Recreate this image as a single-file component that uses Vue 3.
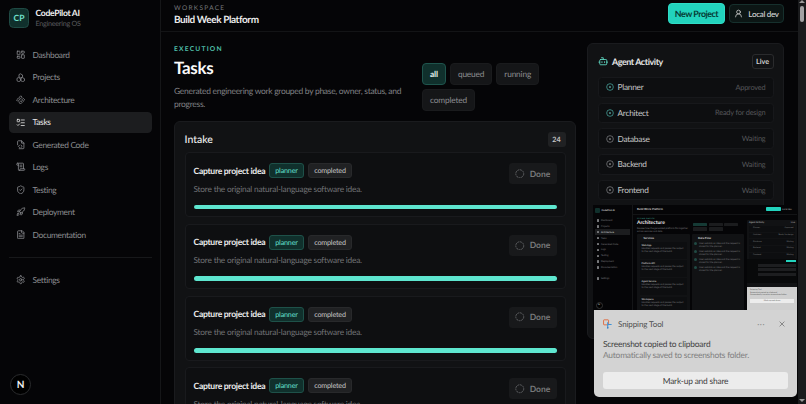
<template>
  <div class="shell">
    <!-- left nav -->
    <aside class="sidebar">
      <div class="brand">
        <div class="brand-logo">CP</div>
        <div>
          <div class="brand-name">CodePilot AI</div>
          <div class="brand-sub">Engineering OS</div>
        </div>
      </div>
      <nav class="nav">
        <a v-for="item in navItems" :key="item.label" class="nav-item" :class="{ active: item.label === 'Tasks' }">
          <svg class="nav-icon" viewBox="0 0 24 24" v-html="item.icon"></svg>
          {{ item.label }}
        </a>
      </nav>
      <div class="nav-divider"></div>
      <a class="nav-item">
        <svg class="nav-icon" viewBox="0 0 24 24" v-html="settingsIcon"></svg>
        Settings
      </a>
      <div class="next-badge">N</div>
    </aside>

    <div class="main">
      <header class="topbar">
        <div>
          <div class="workspace-label">WORKSPACE</div>
          <div class="workspace-name">Build Week Platform</div>
        </div>
        <div class="topbar-actions">
          <button class="btn-new">New Project</button>
          <button class="btn-user">
            <svg viewBox="0 0 24 24" class="user-icon"><circle cx="12" cy="8" r="5" /><path d="M20 21a8 8 0 0 0-16 0" /></svg>
            Local dev
          </button>
        </div>
      </header>

      <div class="content">
        <section class="tasks-col">
          <div class="eyebrow">EXECUTION</div>
          <div class="page-head">
            <div class="page-head-text">
              <h1>Tasks</h1>
              <p>Generated engineering work grouped by phase, owner, status, and progress.</p>
            </div>
            <div class="filters">
              <button v-for="f in filters" :key="f" class="filter" :class="{ on: f === 'all' }">{{ f }}</button>
            </div>
          </div>

          <div class="phase">
            <div class="phase-head">
              <h2>Intake</h2>
              <span class="count">24</span>
            </div>
            <div v-for="n in 4" :key="n" class="task">
              <div class="task-body">
                <div class="task-title-row">
                  <span class="task-title">Capture project idea</span>
                  <span class="tag tag-owner">planner</span>
                  <span class="tag">completed</span>
                </div>
                <div class="task-desc">Store the original natural-language software idea.</div>
              </div>
              <button class="btn-done">
                <svg viewBox="0 0 24 24" class="spin"><circle cx="12" cy="12" r="10" stroke-dasharray="5 1.6" /></svg>
                Done
              </button>
              <div class="progress"></div>
            </div>
          </div>
        </section>

        <aside class="activity">
          <div class="activity-head">
            <svg viewBox="0 0 24 24" class="bot"><path d="M12 8V4H8" /><rect x="4" y="8" width="16" height="12" rx="2" /><path d="M2 14h2M20 14h2M15 13v2M9 13v2" /></svg>
            <span class="activity-title">Agent Activity</span>
            <span class="live">Live</span>
          </div>
          <div v-for="a in agents" :key="a.name" class="agent">
            <svg viewBox="0 0 24 24" class="agent-dot" :class="{ ready: a.ready }"><circle cx="12" cy="12" r="10" /><circle cx="12" cy="12" r="1.6" class="pip" /></svg>
            <span class="agent-name">{{ a.name }}</span>
            <span class="agent-status">{{ a.status }}</span>
          </div>
        </aside>
      </div>
    </div>

    <div class="scrollbar">
      <span class="arrow up"></span>
      <span class="thumb"></span>
      <span class="arrow down"></span>
    </div>

    <!-- screenshot preview that Windows lays over the page -->
    <div class="shot">
      <div class="shot-side">
        <div class="shot-brand"><i></i><span>CodePilot AI</span></div>
        <div v-for="item in navItems" :key="item.label" class="shot-nav" :class="{ on: item.label === 'Architecture' }"><i></i>{{ item.label }}</div>
        <div class="shot-nav shot-settings"><i></i>Settings</div>
        <div class="shot-n">N</div>
      </div>
      <div class="shot-main">
        <div class="shot-top">
          <b>Build Week Platform</b>
          <span class="shot-new"></span>
          <span class="shot-dev">Local dev</span>
        </div>
        <div class="shot-body">
          <div class="shot-left">
            <div class="shot-eyebrow">SYSTEM DESIGN</div>
            <div class="shot-head">
              <div class="shot-title">
                <strong>Architecture</strong>
                <p>Review how the generated platform fits together across services and data.</p>
              </div>
              <div class="shot-chips"><i class="hi"></i><i></i><i></i><i></i><i></i></div>
            </div>
            <div class="shot-cols">
              <div class="shot-panel">
                <h4>Services</h4>
                <div v-for="s in miniServices" :key="s" class="shot-card">
                  <em>{{ s }}</em>
                  <p>Handles requests and passes the output to the next stage of the build.</p>
                </div>
              </div>
              <div class="shot-panel">
                <h4>Data Flow</h4>
                <div v-for="n in 4" :key="n" class="shot-step"><i></i><p>User submits an idea and the request is stored for the planner.</p></div>
              </div>
            </div>
          </div>
          <div class="shot-right">
            <div class="shot-act-title"><b>Agent Activity</b><span>Live</span></div>
            <div v-for="a in agents" :key="a.name" class="shot-agent"><span>{{ a.name }}</span><span>{{ a.status }}</span></div>
            <div class="shot-nested">
              <div class="shot-nested-bar"></div>
              <div class="shot-nested-row"></div>
              <div class="shot-nested-row"></div>
              <div class="shot-nested-row"></div>
            </div>
            <div class="shot-toast">
              <div>Snipping Tool</div>
              <p>Screenshot copied to clipboard</p>
              <p>Automatically saved to screenshots folder.</p>
              <div class="shot-toast-btn">Mark-up and share</div>
            </div>
          </div>
        </div>
      </div>
    </div>

    <div class="toast">
      <div class="toast-head">
        <svg viewBox="0 0 18 18" class="snip">
          <rect x="1" y="1.5" width="9" height="9" rx="1" fill="none" stroke="#e0663a" stroke-width="1.6" />
          <path d="M8.5 6v10M8.5 10h7" stroke="#3d93d8" stroke-width="2" fill="none" />
          <circle cx="8.5" cy="16" r="1.5" fill="#3d7fc4" />
        </svg>
        <span class="toast-app">Snipping Tool</span>
        <span class="toast-more">···</span>
        <svg viewBox="0 0 10 10" class="toast-close"><path d="M1 1l8 8M9 1l-8 8" /></svg>
      </div>
      <div class="toast-title">Screenshot copied to clipboard</div>
      <div class="toast-sub">Automatically saved to screenshots folder.</div>
      <button class="toast-btn">Mark-up and share</button>
    </div>
  </div>
</template>

<script setup>
const navItems = [
  { label: 'Dashboard', icon: '<rect x="3" y="3" width="7" height="9" rx="1"/><rect x="14" y="3" width="7" height="5" rx="1"/><rect x="14" y="12" width="7" height="9" rx="1"/><rect x="3" y="16" width="7" height="5" rx="1"/>' },
  { label: 'Projects', icon: '<path d="M12 2.5l4.5 2.5v5L12 12.5 7.5 10V5z"/><path d="M7 12l4.5 2.5v5L7 22l-4.5-2.5v-5z"/><path d="M17 12l4.5 2.5v5L17 22l-4.5-2.5v-5z"/>' },
  { label: 'Architecture', icon: '<path d="M8.5 5.5 12 2l3.5 3.5L12 9z"/><path d="M15 12l3.5-3.5L22 12l-3.5 3.5z"/><path d="M2 12l3.5-3.5L9 12l-3.5 3.5z"/><path d="M8.5 18.5 12 15l3.5 3.5L12 22z"/>' },
  { label: 'Tasks', icon: '<path d="M13 5h8M13 12h8M13 19h8"/><rect x="3" y="3.5" width="6" height="6" rx="1"/><path d="M3 17l2 2 4-4"/>' },
  { label: 'Generated Code', icon: '<path d="M4 12V4a2 2 0 0 1 2-2h8l6 6v12a2 2 0 0 1-2 2H8"/><path d="M14 2v6h6"/><path d="M9 13l-3 3 3 3M13 13l2 3-2 3"/>' },
  { label: 'Logs', icon: '<path d="M15 12h-5M15 8h-5"/><path d="M19 17V5a2 2 0 0 0-2-2H4"/><path d="M8 21h12a2 2 0 0 0 2-2v-1a1 1 0 0 0-1-1H11a1 1 0 0 0-1 1v1a2 2 0 1 1-4 0V5a2 2 0 1 0-4 0v2a1 1 0 0 0 1 1h3"/>' },
  { label: 'Testing', icon: '<path d="M20 13c0 5-3.5 7.500-7.660 8.950a1 1 0 0 1-.670-.010C7.500 20.500 4 18 4 13V6a1 1 0 0 1 1-1c2 0 4.500-1.200 6.240-2.720a1.170 1.170 0 0 1 1.520 0C14.510 3.810 17 5 19 5a1 1 0 0 1 1 1z"/><path d="M9 12l2 2 4-4"/>' },
  { label: 'Deployment', icon: '<path d="M4.500 16.500c-1.500 1.260-2 5-2 5s3.740-.5 5-2c.710-.840.700-2.130-.090-2.910a2.180 2.180 0 0 0-2.910-.090z"/><path d="M12 15l-3-3a22 22 0 0 1 2-3.950A12.880 12.880 0 0 1 22 2c0 2.720-.780 7.500-6 11a22.350 22.350 0 0 1-4 2z"/><path d="M9 12H4s.550-3.030 2-4c1.620-1.080 5 0 5 0M12 15v5s3.030-.550 4-2c1.080-1.620 0-5 0-5"/>' },
  { label: 'Documentation', icon: '<path d="M15 2H6a2 2 0 0 0-2 2v16a2 2 0 0 0 2 2h12a2 2 0 0 0 2-2V7z"/><path d="M14 2v4a2 2 0 0 0 2 2h4"/><path d="M10 9H8M16 13H8M16 17H8"/>' }
]
const settingsIcon = '<path d="M12.220 2h-.440a2 2 0 0 0-2 2v.180a2 2 0 0 1-1 1.730l-.430.250a2 2 0 0 1-2 0l-.150-.080a2 2 0 0 0-2.730.730l-.220.380a2 2 0 0 0 .730 2.730l.150.100a2 2 0 0 1 1 1.720v.510a2 2 0 0 1-1 1.740l-.150.090a2 2 0 0 0-.730 2.730l.220.380a2 2 0 0 0 2.730.730l.150-.080a2 2 0 0 1 2 0l.430.250a2 2 0 0 1 1 1.730V20a2 2 0 0 0 2 2h.440a2 2 0 0 0 2-2v-.180a2 2 0 0 1 1-1.730l.430-.250a2 2 0 0 1 2 0l.150.080a2 2 0 0 0 2.730-.730l.220-.390a2 2 0 0 0-.730-2.730l-.150-.080a2 2 0 0 1-1-1.740v-.500a2 2 0 0 1 1-1.740l.150-.090a2 2 0 0 0 .730-2.730l-.220-.380a2 2 0 0 0-2.730-.730l-.150.080a2 2 0 0 1-2 0l-.430-.250a2 2 0 0 1-1-1.730V4a2 2 0 0 0-2-2z"/><circle cx="12" cy="12" r="3"/>'
const filters = ['all', 'queued', 'running', 'completed']
const agents = [
  { name: 'Planner', status: 'Approved', ready: true },
  { name: 'Architect', status: 'Ready for design', ready: true },
  { name: 'Database', status: 'Waiting' },
  { name: 'Backend', status: 'Waiting' },
  { name: 'Frontend', status: 'Waiting' }
]
const miniServices = ['Web App', 'Platform API', 'Agent Service', 'Workspace']
</script>

<style>
html, body { margin: 0; background: #050507; overflow: hidden; }
</style>

<style scoped>
.shell {
  position: relative;
  display: flex;
  width: 806px;
  height: 404px;
  overflow: hidden;
  background: #050507;
  color: #e6e6e6;
  font-family: Lato, "Noto Sans", sans-serif;
  text-rendering: geometricPrecision;
}
.sidebar {
  position: relative;
  width: 161px;
  flex: none;
  box-sizing: border-box;
  padding: 7px 8.5px 0 9px;
  border-right: 1px solid #151618;
}
.brand { display: flex; align-items: center; gap: 6.5px; margin-bottom: 15.5px; }
.brand-logo {
  width: 20px;
  height: 20px;
  box-sizing: border-box;
  display: flex;
  align-items: center;
  justify-content: center;
  border: 1px solid #1f4a44;
  border-radius: 4.5px;
  background: #10302c;
  color: #71e0cd;
  font-size: 8.5px;
  font-weight: 700;
}
.brand-name { font-size: 8.600px; line-height: 12px; letter-spacing: -0.300px; font-weight: 700; color: #f0f0f0; }
.brand-sub { font-size: 7.200px; line-height: 10px; letter-spacing: -0.250px; color: #5b5c5f; }
.nav { display: flex; flex-direction: column; gap: 1.45px; }
.nav-item {
  display: flex;
  align-items: center;
  gap: 7px;
  height: 21px;
  padding-left: 7px;
  border-radius: 4.5px;
  font-size: 8.400px;
  letter-spacing: -0.300px;
  color: #8c8d90;
}
.nav-item.active { background: #1c1d1f; color: #eaeaea; }
.nav-icon {
  width: 9.500px;
  height: 9.500px;
  fill: none;
  stroke: currentColor;
  stroke-width: 2;
  stroke-linecap: round;
  stroke-linejoin: round;
  flex: none;
}
.nav-divider { height: 1px; background: #17181a; margin: 12px 0 11.500px; }
.next-badge {
  position: absolute;
  left: 10px;
  bottom: 9px;
  width: 21px;
  height: 21px;
  box-sizing: border-box;
  border: 1px solid #2a2b2d;
  border-radius: 50%;
  background: #000;
  color: #f2f2f2;
  font-size: 10px;
  font-weight: 700;
  display: flex;
  align-items: center;
  justify-content: center;
}
.main { flex: 1; min-width: 0; display: flex; flex-direction: column; }
.topbar {
  height: 32px;
  flex: none;
  box-sizing: border-box;
  display: flex;
  align-items: flex-start;
  justify-content: space-between;
  padding: 3px 14px 0 13px;
  border-bottom: 1px solid #131416;
}
.workspace-label { padding-top: 1px; font-size: 6.500px; line-height: 9px; letter-spacing: 1.300px; color: #77787b; }
.workspace-name { font-size: 10px; line-height: 14px; letter-spacing: -0.400px; margin-top: -0.500px; font-weight: 700; color: #ececec; }
.topbar-actions { display: flex; align-items: center; gap: 4px; }
button { font-family: inherit; text-rendering: inherit; }
.btn-new {
  width: 57px;
  height: 21px;
  padding: 0;
  border: 1px solid #2fdcc6;
  border-radius: 4px;
  background: #22d3bd;
  color: #053a34;
  font-size: 8.800px;
  letter-spacing: -0.450px;
  font-weight: 700;
}
.btn-user {
  width: 55px;
  height: 19px;
  padding: 0;
  display: flex;
  align-items: center;
  justify-content: center;
  gap: 5px;
  border: 1px solid #16302d;
  border-radius: 4px;
  background: #0c1615;
  color: #d5d5d5;
  font-size: 8px;
  letter-spacing: -0.300px;
  font-weight: 500;
}
.user-icon { width: 9px; height: 9px; fill: none; stroke: currentColor; stroke-width: 2; stroke-linecap: round; }
.content { flex: 1; min-height: 0; display: flex; gap: 11px; padding: 12.500px 13px 0; overflow: hidden; }
.tasks-col { width: 402px; flex: none; }
.eyebrow { font-size: 6.700px; line-height: 9px; letter-spacing: 1.200px; font-weight: 700; color: #4fbfa9; }
.page-head { display: flex; gap: 14px; margin-top: 0.500px; }
.page-head-text { width: 234px; flex: none; }
h1 { margin: 0; font-size: 17px; line-height: 28px; letter-spacing: -0.300px; font-weight: 700; color: #fafafa; }
.page-head-text p { margin: 2.500px 0 0; font-size: 8.500px; line-height: 13.500px; letter-spacing: -0.300px; color: #808184; }
.filters { display: flex; flex-wrap: wrap; align-content: flex-start; gap: 4px; margin-top: 9px; width: 125px; }
.filter {
  height: 22px;
  padding: 0 7px;
  border: 1px solid #1a1b1d;
  border-radius: 4px;
  background: #151618;
  color: #8c8d90;
  font-size: 8.300px;
  letter-spacing: -0.150px;
}
.filter.on { border-color: #1e544c; background: #10302c; color: #e3efec; font-weight: 700; }
.phase {
  margin-top: 9.500px;
  box-sizing: border-box;
  padding: 0 9.500px 20px;
  border: 1px solid #1a1b1e;
  border-radius: 6px;
  background: #111214;
}
.phase-head { height: 30px; box-sizing: border-box; padding-top: 5px; display: flex; align-items: center; justify-content: space-between; }
h2 { margin: 0; font-size: 10.500px; font-weight: 500; color: #efefef; }
.count {
  width: 18px;
  height: 15px;
  display: flex;
  align-items: center;
  justify-content: center;
  border-radius: 3px;
  background: #202123;
  color: #c5c5c5;
  font-size: 7.200px;
  font-weight: 700;
}
.task {
  position: relative;
  height: 65px;
  box-sizing: border-box;
  margin-bottom: 6.800px;
  padding: 10px 8px 0;
  display: grid;
  grid-template-columns: 1fr auto;
  border: 1px solid #191a1d;
  border-radius: 4px;
  background: #0e0f11;
}
.task-title-row { display: flex; align-items: center; gap: 4.500px; height: 15px; }
.task-title { font-size: 8.600px; letter-spacing: -0.300px; font-weight: 700; color: #ececec; margin-right: -0.500px; }
.tag {
  height: 15px;
  box-sizing: border-box;
  padding: 0 5px;
  display: flex;
  align-items: center;
  border: 1px solid #28292b;
  border-radius: 3px;
  background: #202123;
  color: #bcbcbc;
  font-size: 7.200px;
  letter-spacing: -0.200px;
  font-weight: 500;
}
.tag-owner { border-color: #1e5149; background: #10302c; color: #5fd8c2; }
.task-desc { margin-top: 4.500px; font-size: 8.300px; line-height: 12px; letter-spacing: -0.200px; color: #727376; }
.btn-done {
  width: 47.500px;
  height: 21px;
  padding: 0;
  display: flex;
  align-items: center;
  justify-content: center;
  gap: 5px;
  border: 0;
  border-radius: 3.500px;
  background: #18191b;
  color: #77787a;
  font-size: 8.500px;
  font-weight: 700;
}
.spin { width: 9.500px; height: 9.500px; fill: none; stroke: #77787a; stroke-width: 1.800; }
.progress {
  position: absolute;
  left: 8px;
  right: 8px;
  bottom: 7px;
  height: 4.500px;
  border-radius: 3px;
  background: #5ee6cf;
}
.activity {
  width: 197px;
  height: 296px;
  flex: none;
  margin-top: -1.500px;
  box-sizing: border-box;
  padding: 0 9.500px;
  border: 1px solid #1a1b1e;
  border-radius: 6px;
  background: #111214;
}
.activity-head { height: 33px; box-sizing: border-box; padding-top: 1px; display: flex; align-items: center; gap: 4px; }
.bot { width: 10.500px; height: 10.500px; fill: none; stroke: #5fd8c2; stroke-width: 2; stroke-linecap: round; stroke-linejoin: round; }
.activity-title { flex: 1; font-size: 8.900px; letter-spacing: -0.400px; font-weight: 700; color: #e6e6e6; }
.live {
  width: 22px;
  height: 15px;
  box-sizing: border-box;
  display: flex;
  align-items: center;
  justify-content: center;
  border: 1px solid #2a2b2d;
  border-radius: 3px;
  color: #d0d0d0;
  font-size: 7.200px;
  font-weight: 700;
}
.agent {
  height: 20.500px;
  box-sizing: border-box;
  margin-bottom: 5.200px;
  padding: 0 7px;
  display: flex;
  align-items: center;
  gap: 4px;
  border: 1px solid #17181b;
  border-radius: 3.500px;
  background: #0d0e10;
}
.agent-dot { width: 8px; height: 8px; fill: none; stroke: #8a8b8e; stroke-width: 2; flex: none; }
.agent-dot .pip { fill: currentColor; }
.agent-dot.ready { stroke: #4fb9b0; }
.agent-name { flex: 1; font-size: 8.300px; letter-spacing: -0.250px; color: #c6c6c6; }
.agent-status { font-size: 7.400px; letter-spacing: -0.200px; color: #56575a; }
.scrollbar {
  width: 8px;
  flex: none;
  position: relative;
  background: #1a1b1d;
}
.thumb { position: absolute; left: 2px; top: 6px; width: 4px; height: 16px; border-radius: 2px; background: #a2a2a4; }
.arrow { position: absolute; left: 1px; width: 0; height: 0; border-left: 3px solid transparent; border-right: 3px solid transparent; }
.arrow.up { top: 0; border-bottom: 3px solid #9a9a9a; }
.arrow.down { bottom: 2px; border-top: 3px solid #9a9a9a; }

/* preview */
.shot {
  position: absolute;
  left: 593px;
  top: 205px;
  width: 204px;
  height: 105px;
  display: flex;
  overflow: hidden;
  background: #050507;
  color: #77787b;
  font-size: 2.400px;
  line-height: 3px;
}
.shot p { margin: 0; }
.shot i { display: block; }
.shot-side { position: relative; width: 40px; flex: none; box-sizing: border-box; padding: 3px 2px 0; border-right: 1px solid #141517; }
.shot-brand { display: flex; align-items: center; gap: 1.500px; height: 5px; margin-bottom: 4.500px; color: #d8d8d8; font-weight: 700; }
.shot-brand i { width: 5px; height: 5px; border-radius: 1px; background: #10302c; }
.shot-nav { display: flex; align-items: center; gap: 2px; height: 5.900px; padding-left: 1.500px; }
.shot-nav i { width: 2.500px; height: 2.500px; border-radius: 0.500px; background: #77787b; }
.shot-nav.on { background: #1c1d1f; color: #dadada; }
.shot-settings { margin-top: 5px; }
.shot-n { position: absolute; left: 2.500px; bottom: 1px; width: 5px; height: 5px; line-height: 5px; text-align: center; border-radius: 50%; background: #000; border: 0.500px solid #333; color: #eee; font-size: 2px; }
.shot-main { flex: 1; min-width: 0; display: flex; flex-direction: column; }
.shot-top { height: 8.500px; flex: none; display: flex; align-items: center; gap: 1.500px; padding: 0 2px 0 4px; border-bottom: 0.500px solid #131416; }
.shot-top b { flex: 1; color: #d0d0d0; font-size: 2.800px; }
.shot-new { width: 15px; height: 4px; border-radius: 0.800px; background: #22d3bd; }
.shot-dev { width: 13px; color: #aaa; }
.shot-body { flex: 1; display: flex; gap: 3px; padding: 3px 0 0 4px; min-height: 0; }
.shot-left { width: 107px; flex: none; }
.shot-eyebrow { color: #4fbfa9; font-size: 1.800px; line-height: 2.500px; letter-spacing: 0.300px; }
.shot-head { display: flex; gap: 3px; height: 13px; }
.shot-title { width: 53px; flex: none; }
.shot-title strong { display: block; font-size: 5px; line-height: 6.500px; color: #efefef; font-weight: 700; }
.shot-chips { display: flex; flex-wrap: wrap; gap: 1px 1.500px; align-content: flex-start; padding-top: 2.500px; }
.shot-chips i { width: 14px; height: 3.500px; border-radius: 0.500px; background: #1b1c1e; }
.shot-chips .hi { background: #153a35; }
.shot-cols { display: flex; gap: 2px; margin-top: 1px; }
.shot-panel { flex: 1; box-sizing: border-box; height: 80px; padding: 1.500px 2.500px; background: #111214; border-radius: 1px; }
.shot-panel h4 { margin: 0 0 2.500px; padding-left: 4px; color: #d8d8d8; font-size: 2.900px; line-height: 4px; font-weight: 700; }
.shot-card { height: 17px; box-sizing: border-box; margin-bottom: 1.200px; padding: 1.500px 2px; background: #0d0e10; }
.shot-card em { display: block; font-style: normal; color: #c8c8c8; font-weight: 700; }
.shot-step { display: flex; gap: 2px; margin-bottom: 2px; }
.shot-step i { width: 3px; height: 3px; flex: none; border-radius: 50%; background: #214a44; }
.shot-right { position: relative; flex: 1; min-width: 0; box-sizing: border-box; margin-top: 2px; padding: 1.500px 2px 0; background: #111214; border-radius: 1px; }
.shot-act-title { display: flex; justify-content: space-between; height: 5px; color: #aaa; }
.shot-agent { display: flex; justify-content: space-between; align-items: center; height: 5.800px; margin-bottom: 0.900px; padding: 0 1.500px 0 4px; background: #0d0e10; font-size: 2.100px; color: #78797b; }
.shot-nested { margin: 0.500px -2px 0; height: 24px; background: #08090a; padding: 1px; box-sizing: border-box; }
.shot-nested-bar { height: 2px; width: 10px; margin-left: auto; background: #22d3bd; }
.shot-nested-row { height: 3px; margin: 1.500px 0 0 10px; background: #1d1e20; }
.shot-toast { position: absolute; left: 0; right: 0; bottom: 0; height: 23px; box-sizing: border-box; padding: 2px 3px; background: #cfcfcf; color: #555; font-size: 2px; line-height: 2.700px; }
.shot-toast-btn { margin-top: 1.500px; height: 4px; line-height: 4px; text-align: center; background: #ececec; }

/* notification */
.toast {
  position: absolute;
  left: 594px;
  top: 310px;
  width: 203px;
  height: 87px;
  box-sizing: border-box;
  padding: 0 9px;
  border-radius: 0 0 5px 5px;
  background: #d3d3d3;
  color: #3d3d3d;
}
.toast-head { height: 27px; display: flex; align-items: center; }
.snip { width: 10px; height: 10px; flex: none; margin-right: 5px; }
.toast-app { flex: 1; font-size: 8px; letter-spacing: -0.100px; color: #4e4e4e; }
.toast-more { margin-right: 14px; font-size: 8px; letter-spacing: 0.500px; color: #888; }
.toast-close { width: 6px; height: 6px; margin-right: 3px; fill: none; stroke: #555; stroke-width: 1; }
.toast-title { margin-top: 2px; font-size: 8.400px; line-height: 11px; letter-spacing: -0.200px; color: #3f3f3f; }
.toast-sub { font-size: 8.400px; line-height: 11px; letter-spacing: -0.200px; color: #7f7f7f; }
.toast-btn {
  display: block;
  width: 185px;
  height: 17px;
  margin-top: 11px;
  padding: 0;
  border: 0;
  border-radius: 3px;
  background: #ececec;
  color: #3f3f3f;
  font-size: 8.400px;
  letter-spacing: -0.200px;
}
</style>
